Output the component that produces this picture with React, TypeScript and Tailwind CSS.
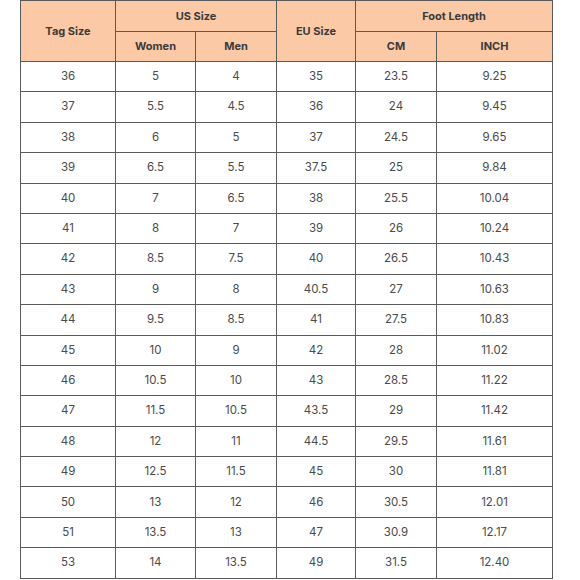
const rows: string[][] = [
  ["36", "5", "4", "35", "23.5", "9.25"],
  ["37", "5.5", "4.5", "36", "24", "9.45"],
  ["38", "6", "5", "37", "24.5", "9.65"],
  ["39", "6.5", "5.5", "37.5", "25", "9.84"],
  ["40", "7", "6.5", "38", "25.5", "10.04"],
  ["41", "8", "7", "39", "26", "10.24"],
  ["42", "8.5", "7.5", "40", "26.5", "10.43"],
  ["43", "9", "8", "40.5", "27", "10.63"],
  ["44", "9.5", "8.5", "41", "27.5", "10.83"],
  ["45", "10", "9", "42", "28", "11.02"],
  ["46", "10.5", "10", "43", "28.5", "11.22"],
  ["47", "11.5", "10.5", "43.5", "29", "11.42"],
  ["48", "12", "11", "44.5", "29.5", "11.61"],
  ["49", "12.5", "11.5", "45", "30", "11.81"],
  ["50", "13", "12", "46", "30.5", "12.01"],
  ["51", "13.5", "13", "47", "30.9", "12.17"],
  ["53", "14", "13.5", "49", "31.5", "12.40"],
];

const th = "border border-[#5a5a5a] bg-[#fcc9a7] text-[11px] font-bold text-[#3a3a3a] text-center align-middle p-0";
const td = "border border-[#5a5a5a] text-[11.5px] text-[#4a4a4a] text-center align-middle p-0";

export default function App() {
  return (
    <div className="w-[580px] h-[580px] bg-white pl-[20px] font-['Inter',_'Liberation_Sans',_sans-serif]">
      <table className="table-fixed border-collapse w-[532px]">
        <colgroup>
          <col className="w-[95px]" />
          <col className="w-[80px]" />
          <col className="w-[81px]" />
          <col className="w-[79px]" />
          <col className="w-[81px]" />
          <col className="w-[116px]" />
        </colgroup>
        <thead>
          <tr className="h-[31px]">
            <th rowSpan={2} className={th}>Tag Size</th>
            <th colSpan={2} className={th}>US Size</th>
            <th rowSpan={2} className={th}>EU Size</th>
            <th colSpan={2} className={th}>Foot Length</th>
          </tr>
          <tr className="h-[30px]">
            <th className={th}>Women</th>
            <th className={th}>Men</th>
            <th className={th}>CM</th>
            <th className={th}>INCH</th>
          </tr>
        </thead>
        <tbody>
          {rows.map((r) => (
            <tr key={r[0]} className="h-[30.4px]">
              {r.map((v, i) => (
                <td key={i} className={td}>{v}</td>
              ))}
            </tr>
          ))}
        </tbody>
      </table>
    </div>
  );
}
